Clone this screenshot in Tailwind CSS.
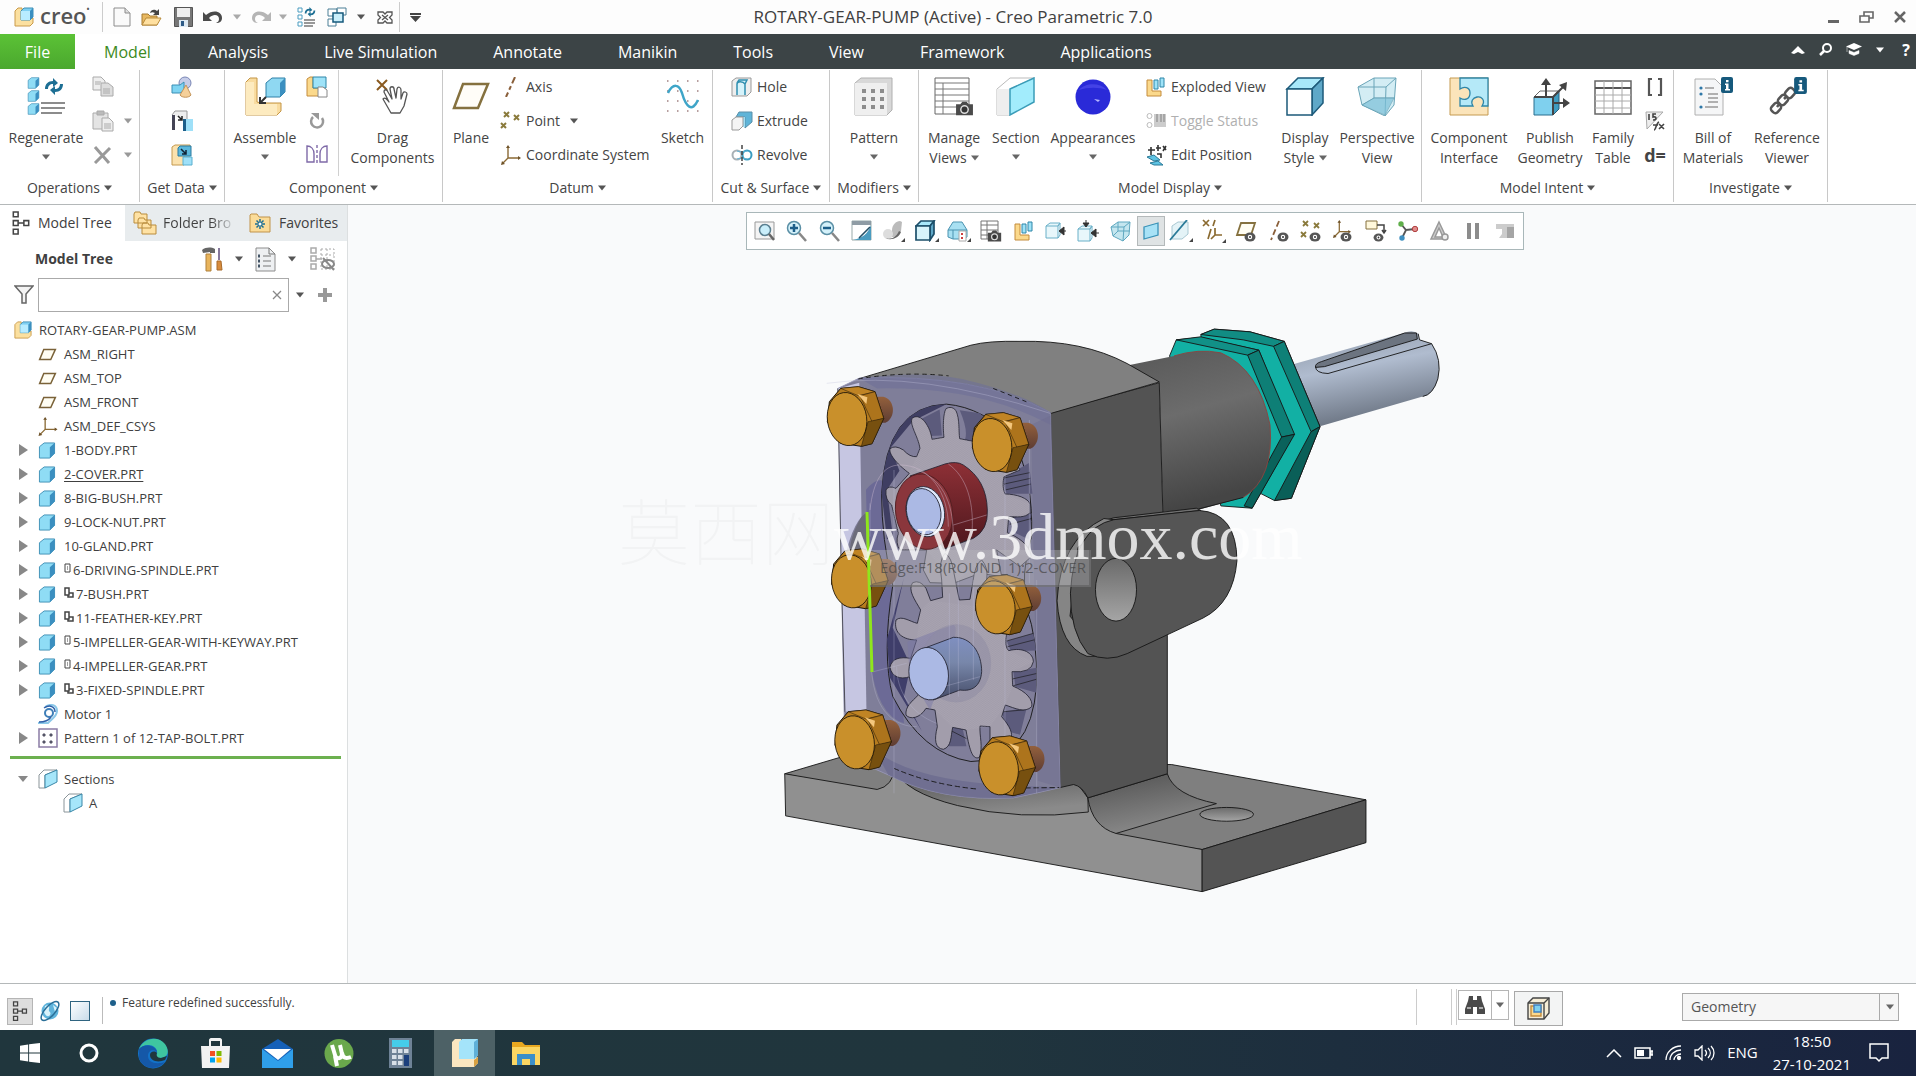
<!DOCTYPE html>
<html lang="en">
  <head>
    <meta charset="UTF-8" />
    <title>ROTARY-GEAR-PUMP (Active) - Creo Parametric 7.0</title>
    <meta name="viewport" content="width=device-width, initial-scale=1.0" />
    <script src="https://cdn.jsdelivr.net/npm/@tailwindcss/browser@4"></script>
  </head>
  <body class="min-h-screen flex flex-col bg-white text-[#404040] font-['Open_Sans','Noto_Sans_CJK_SC',sans-serif] text-sm">
    <!-- shared symbols -->
    <svg class="hidden">
      <defs>
        <linearGradient id="gPart" x1="0" y1="0" x2="1" y2="1"><stop offset="0" stop-color="#d8f6ff" /><stop offset="1" stop-color="#6fcdf0" /></linearGradient>
        <symbol id="caret" viewBox="0 0 10 6"><path d="M0 0h10L5 6z" fill="currentColor" /></symbol>
        <symbol id="part" viewBox="0 0 18 18">
          <path d="M1 5l5-4h11v11l-5 5H1z" fill="#8fdcf5" stroke="#3f8fb5" />
          <path d="M12 5.500l5-4.500v11l-5 5z" fill="#3b8fc0" />
          <path d="M2 5.500h10V16H2z" fill="url(#gPart)" />
        </symbol>
        <symbol id="asm" viewBox="0 0 20 20">
          <path d="M1 4l3-3h4v11h8l3-1v5l-3 3H1z" fill="#fbe0a0" stroke="#c99a4a" />
          <path d="M7 4l3-3h9v9l-3 3H7z" fill="#7fd0f2" stroke="#3f8fb5" />
          <path d="M7 4h9v9H7z" fill="#b8ecff" />
          <path d="M16 4l3-3v9l-3 3z" fill="#3b8fc0" />
        </symbol>
        <symbol id="plane" viewBox="0 0 20 14"><path d="M6 1.500h12.500l-5 11H1.500z" fill="#fffdf2" stroke="#7a6238" stroke-width="1.600" /></symbol>
        <symbol id="csys" viewBox="0 0 20 20">
          <path d="M7 2v11h11M7 13l-5 5" fill="none" stroke="#8a6a35" stroke-width="1.400" />
          <path d="M7 0l2 3H5zM20 13l-3-2v4zM0 20l1-4 3 3z" fill="#6e5228" />
        </symbol>
        <symbol id="sec" viewBox="0 0 20 20">
          <path d="M1 6l5-5h13l-12 5v13H1z" fill="#fff" stroke="#8a9499" />
          <path d="M7 6l12-5v12L7 19z" fill="#a6e6fa" stroke="#3a87a8" />
        </symbol>
        <symbol id="treei" viewBox="0 0 18 26">
          <g fill="none" stroke="#444" stroke-width="1.600"><path d="M1 1h5v5H1zM1 10h5v5H1zM1 19h5v5H1zM12 10h5v5h-5zM6 12.500h6" /></g>
        </symbol>
        <symbol id="eye" viewBox="0 0 12 10"><ellipse cx="6" cy="5" rx="5.500" ry="4.500" fill="#555" /><circle cx="6" cy="5" r="2.200" fill="#fff" /><circle cx="6" cy="5" r="1" fill="#333" /></symbol>
        <symbol id="cam" viewBox="0 0 18 14"><path d="M1 3h4l2-2.500h4L13 3h4v10.500H1z" fill="#4a4a4a" /><circle cx="9" cy="8" r="4.200" fill="#ddd" /><circle cx="9" cy="8" r="2.800" fill="#333" /></symbol>
        <symbol id="info" viewBox="0 0 12 16"><rect width="12" height="16" rx="2" fill="#16597c" /><path d="M5 3h2.500v2.200H5zM4 6.500h3.500V12H9v1.500H4V12h1V8H4z" fill="#fff" /></symbol>
        <symbol id="expl" viewBox="0 0 20 20"><path d="M1 3h5v11h9v5H1z" fill="#fbd98c" stroke="#c48c3c" /><path d="M8 3h4v9H8zM14 1h4v9h-4z" fill="#9fe3f8" stroke="#2f86a8" /></symbol>
        <symbol id="cyc" viewBox="0 0 20 17">
          <path d="M1 11c0-5 3-8 8-8V0l5 5-5 4V6C6 6 4 8 4 11z" fill="#1d6f94" />
          <path d="M19 6c0 5-3 8-8 8v3l-5-5 5-4v3c3 0 5-2 5-5z" fill="#1d6f94" />
        </symbol>
      </defs>
    </svg>

    <!-- title bar -->
    <header class="h-[34px] flex items-center bg-[#fdfdfd]">
      <div class="flex-1 flex items-center h-full">
        <svg class="w-5 h-5 ml-3.5"><use href="#asm" /></svg>
        <span class="ml-1.5 w-[62px] text-[22px] leading-7 font-semibold text-[#555] pb-1">creo<sup class="text-[8px] -top-3">•</sup></span>
        <span class="w-px h-[30px] bg-[#ccc]"></span>
        <button class="ml-2.5" aria-label="New"><svg width="18" height="20" viewBox="0 0 18 20"><path d="M1 1h11l5 5v13H1z" fill="#fafafa" stroke="#8c8c8c" /><path d="M12 1v5h5" fill="#ddd" stroke="#8c8c8c" /></svg></button>
        <button class="ml-2.5" aria-label="Open"><svg width="21" height="20" viewBox="0 0 21 20"><path d="M1 18V7h6l2 2h7v9z" fill="#e8b860" stroke="#a67a30" /><path d="M1 18l4-7h15l-4 7z" fill="#ffe0a0" stroke="#b98c3c" /><path d="M9 6c1-4 5-4 7-2l2-2v6h-6l2-2c-2-1-3-1-5 0z" fill="#444" /></svg></button>
        <button class="ml-3" aria-label="Save"><svg width="19" height="20" viewBox="0 0 19 20"><path d="M.5.500h18v19H.5z" fill="#777" stroke="#555" /><path d="M3 1h13v9H3z" fill="#eee" /><path d="M5 13h9v7H5z" fill="#dde9f2" /><path d="M7 14h3v5H7z" fill="#2d5a86" /></svg></button>
        <button class="ml-2.5" aria-label="Undo"><svg width="20" height="14" viewBox="0 0 20 14"><path d="M0 2v9h9L6 8c5-5 10-3 10 1 0 2-1 3-3 4 4 0 6-2 6-5 0-7-9-9-16-3z" fill="#4a4a4a" /></svg></button>
        <svg class="w-2 h-1.5 ml-2.5 text-[#aaa]"><use href="#caret" /></svg>
        <button class="ml-2.5" aria-label="Redo"><svg width="20" height="14" viewBox="0 0 20 14"><path d="M20 2v9h-9l3-3C9 3 4 5 4 9c0 2 1 3 3 4-4 0-6-2-6-5 0-7 9-9 16-3z" fill="#b5b5b5" /></svg></button>
        <svg class="w-2 h-1.5 ml-2 text-[#aaa]"><use href="#caret" /></svg>
        <button class="ml-2.5" aria-label="Regenerate"><svg width="20" height="20" viewBox="0 0 20 20"><path d="M1 1h4v4H1zM1 8h4v4H1zM1 15h4v4H1z" fill="#fff" stroke="#4a9cc0" /><use href="#cyc" x="7" y="0" width="12" height="10" /><path d="M7 13h11M7 16h11M7 19h9" stroke="#777" stroke-width="1.500" /></svg></button>
        <button class="ml-2.5" aria-label="Windows"><svg width="20" height="20" viewBox="0 0 20 20" fill="#c9eefa" stroke="#4a7f96"><path d="M1 2h9v7H1zM10 1h9v7h-9zM1 12h8v7H1z" fill="#fff" /><path d="M6 6h10v9H6z" stroke="#16597c" stroke-width="1.500" /></svg></button>
        <svg class="w-2 h-1.5 ml-2.5 text-[#555]"><use href="#caret" /></svg>
        <button class="ml-3" aria-label="Close window"><svg width="16" height="13" viewBox="0 0 16 13"><path d="M1 1h5l2 2 2-2h5v3l-2.500 2.500L15 9v3h-5l-2-2-2 2H1V9l2.500-2.500L1 4z" fill="#fff" stroke="#555" stroke-width="1.300" /><path d="M5 4l6 5M11 4L5 9" stroke="#555" stroke-width="1.300" /></svg></button>
        <span class="ml-1.5 w-px h-[30px] bg-[#ccc]"></span>
        <svg class="ml-2.5" width="11" height="9" viewBox="0 0 11 9"><path d="M0 0h11v2H0zM0 3h11L5.500 9z" fill="#444" /></svg>
      </div>
      <h1 class="text-[17px]">ROTARY-GEAR-PUMP (Active) - Creo Parametric 7.0</h1>
      <div class="flex-1 flex justify-end items-center gap-5 pr-2.5 text-[#666]">
        <button aria-label="Minimize"><svg width="11" height="12"><path d="M0 9h11v3H0z" fill="#666" /></svg></button>
        <button aria-label="Restore"><svg width="15" height="12" viewBox="0 0 15 12" fill="none" stroke="#666" stroke-width="1.600"><path d="M1 5h9v6H1zM5 5V1h9v6h-4" /></svg></button>
        <button aria-label="Close"><svg width="12" height="12" viewBox="0 0 12 12"><path d="M1 1l10 10M11 1L1 11" stroke="#666" stroke-width="2.500" /></svg></button>
      </div>
    </header>

    <!-- ribbon tabs -->
    <nav class="h-[35px] flex bg-[#3c4446] text-white text-base">
      <button class="w-[75px] bg-gradient-to-b from-[#5bc236] to-[#4ba82e]">File</button>
      <button class="w-[105px] bg-white text-[#3d8a22]">Model</button>
      <button class="px-7">Analysis</button>
      <button class="px-7">Live Simulation</button>
      <button class="px-7">Annotate</button>
      <button class="px-7">Manikin</button>
      <button class="px-7">Tools</button>
      <button class="px-7">View</button>
      <button class="px-7">Framework</button>
      <button class="px-7">Applications</button>
      <div class="ml-auto flex items-center gap-3.5 pr-1.5 pb-1">
        <svg width="14" height="8" viewBox="0 0 14 8"><path d="M7 0l7 7-3 1-4-2-4 2-3-1z" fill="#fff" /></svg>
        <svg width="13" height="13" viewBox="0 0 13 13"><circle cx="8" cy="5" r="4" fill="none" stroke="#fff" stroke-width="2" /><path d="M5 8l-4 4" stroke="#fff" stroke-width="2.500" /></svg>
        <svg width="16" height="13" viewBox="0 0 16 13"><path d="M0 3.500L8 0l8 3.500L8 7z" fill="#fff" /><path d="M3 7.500l5 2 5-2v3l-5 2-5-2zM1 4v5" fill="#fff" stroke="#fff" stroke-width=".5" /></svg>
        <svg class="w-2 h-1.5"><use href="#caret" /></svg>
        <button class="font-bold pl-1" aria-label="Help">?</button>
      </div>
    </nav>

    <!-- ribbon -->
    <section class="h-[136px] flex border-b border-[#b4b8b9] bg-white pt-px text-[#444] leading-5">
      <div class="w-[140px] flex flex-col border-r border-[#c8c8c8] mb-0.5 pb-0.5">
        <div class="flex-1 flex">
          <button class="w-[92px] flex flex-col items-center justify-start pt-[7px]">
            <svg class="mb-3" width="40" height="39" viewBox="0 0 40 39">
              <use href="#part" x="1" y="0" width="13" height="12" /><use href="#part" x="1" y="13" width="13" height="12" /><use href="#part" x="1" y="26" width="13" height="12" />
              <use href="#cyc" x="18" y="1" width="20" height="17" />
              <path d="M15 26h24M15 31h24M15 36h21" stroke="#8c8c8c" stroke-width="2" />
            </svg>
            <span>Regenerate</span>
            <svg class="w-2 h-1.5 mt-1.5 text-[#666]"><use href="#caret" /></svg>
          </button>
          <div class="flex flex-col text-[#999]">
            <button class="h-[34px] flex items-center" aria-label="Copy"><svg width="22" height="22" viewBox="0 0 22 22" fill="#eee" stroke="#aaa"><path d="M1 1h8l4 4v9H1z" /><path d="M9 7h7l5 4v9H9z" fill="#ddd" /><path d="M11 13h7M11 15h7M11 17h7M3 6h6M3 8h5" /></svg></button>
            <button class="h-[34px] flex items-center gap-2.5" aria-label="Paste"><svg width="22" height="22" viewBox="0 0 22 22" fill="#e4e4e4" stroke="#aaa"><path d="M1 3h15v16H1z" /><path d="M5 1h7v4H5z" fill="#bbb" /><path d="M10 8h7l4 4v9H10z" fill="#eee" /><path d="M12 14h7M12 16h7M12 18h7" /></svg><svg class="w-2 h-1.5"><use href="#caret" /></svg></button>
            <button class="h-[34px] flex items-center gap-2.5" aria-label="Delete"><svg width="22" height="18" viewBox="0 0 22 18"><path d="M3 1l14 16M18 2L3 17" stroke="#999" stroke-width="3" /></svg><svg class="w-2 h-1.5"><use href="#caret" /></svg></button>
          </div>
        </div>
        <div class="h-6 flex items-center justify-center gap-1">Operations <svg class="w-2 h-1.5 text-[#555]"><use href="#caret" /></svg></div>
      </div>

      <div class="w-[85px] flex flex-col border-r border-[#c8c8c8] mb-0.5 pb-0.5">
        <div class="flex-1 flex flex-col items-center">
          <button class="h-[34px]" aria-label="User-defined feature"><svg width="22" height="22" viewBox="0 0 22 22"><circle cx="14" cy="7" r="6" fill="#c5cce8" stroke="#7a86b5" /><path d="M1 9h8l4-3v9l-4 2H1z" fill="#7fd4f2" stroke="#3a8fb5" /><path d="M15 9l5 10c-2 3-9 3-11 0z" fill="#f5d09a" stroke="#c4955a" /></svg></button>
          <button class="h-[34px]" aria-label="Copy geometry"><svg width="22" height="22" viewBox="0 0 22 22"><path d="M1 5l3-4h12v9" fill="#eee" stroke="#999" /><path d="M1 5h3v15H1z" fill="#445" /><path d="M7 6l4 4M11 6v4H7" stroke="#222" stroke-width="1.500" fill="none" /><path d="M14 9h8v12h-8z" fill="#9fe0f8" /><path d="M12 9h3v12h-3z" fill="#1d5f8a" /></svg></button>
          <button class="h-[34px]" aria-label="Shrinkwrap"><svg width="22" height="22" viewBox="0 0 22 22"><path d="M1 3l3-2h15v11h-6v9H1z" fill="#fbe2ae" stroke="#c49a50" /><path d="M7 4l2-2h11v10H7z" fill="#5cb8dc" stroke="#2a7ba0" /><path d="M10 5l5 5M15 6v4h-4" stroke="#123" stroke-width="1.500" fill="none" /><path d="M12 13h9v8h-9z" fill="#9fe0f8" stroke="#5bb0d0" /></svg></button>
        </div>
        <div class="h-6 flex items-center justify-center gap-1">Get Data <svg class="w-2 h-1.5 text-[#555]"><use href="#caret" /></svg></div>
      </div>

      <div class="w-[218px] flex flex-col border-r border-[#c8c8c8] mb-0.5 pb-0.5">
        <div class="flex-1 flex">
          <button class="w-20 flex flex-col items-center justify-start pt-[7px]">
            <svg class="mb-3" width="42" height="39" viewBox="0 0 42 39">
              <path d="M2 5l4-4h7v24l4 1h20v8l-4 4H2z" fill="#f9dca0" stroke="#c49545" /><path d="M2 5h8v22h23v11H2z" fill="#fdebc0" />
              <path d="M22 6l6-5h13v14l-5 5H22z" fill="#8fd8f2" stroke="#2f80a8" /><path d="M36 6l5-5v14l-5 5z" fill="#3b8fc0" />
              <path d="M22 20l-5 5M16 20v6h6" fill="none" stroke="#333" stroke-width="2" />
            </svg>
            <span>Assemble</span>
            <svg class="w-2 h-1.5 mt-1.5 text-[#666]"><use href="#caret" /></svg>
          </button>
          <div class="w-[34px] pl-px flex flex-col items-start border-r border-[#d0d0d0]">
            <button class="h-[34px]" aria-label="Create"><svg width="22" height="22" viewBox="0 0 22 22"><path d="M1 3l3-2h3v11h12v8H1z" fill="#fbd98c" stroke="#c48c3c" /><path d="M7 1h13v11H7z" fill="#9fe3f8" stroke="#2f86a8" /><path d="M12 11h5l4 3v7h-9z" fill="#fff" stroke="#888" /></svg></button>
            <button class="h-[34px]" aria-label="Repeat"><svg width="22" height="18" viewBox="-2 0 22 18"><path d="M5 5a6 6 0 1 0 9 1" fill="none" stroke="#999" stroke-width="2.500" /><path d="M3 1h8v7z" fill="#999" /></svg></button>
            <button class="h-[34px]" aria-label="Mirror component"><svg width="22" height="20" viewBox="0 0 22 20" fill="none" stroke="#7f6aa8" stroke-width="1.400"><path d="M1 1c4 0 7 3 7 8v8H1zM21 1c-4 0-7 3-7 8v8h7z" /><path d="M11 0v20" stroke-dasharray="3 2" /></svg></button>
          </div>
          <button class="flex-1 pl-1 flex flex-col items-center justify-start pt-[7px]">
            <svg class="mb-3" width="36" height="39" viewBox="0 0 36 39">
              <path d="M2 3l10 10M12 3L2 13" stroke="#8a5a20" stroke-width="2" />
              <path d="M8 22c2-2 4 0 6 3l-5-10c0-3 3-3 4 0l4 7-2-10c0-3 4-3 4 0l2 9 1-9c1-3 4-2 4 1v9l2-6c1-2 4-1 4 1l-3 12-4 7H16z" fill="#fff" stroke="#555" stroke-width="1.300" stroke-linejoin="round" />
            </svg>
            <span>Drag</span><span>Components</span>
          </button>
        </div>
        <div class="h-6 flex items-center justify-center gap-1">Component <svg class="w-2 h-1.5 text-[#555]"><use href="#caret" /></svg></div>
      </div>

      <div class="w-[270px] flex flex-col border-r border-[#c8c8c8] mb-0.5 pb-0.5">
        <div class="flex-1 flex">
          <button class="w-14 flex flex-col items-center justify-start pt-[7px]">
            <svg class="mb-3" width="40" height="39" viewBox="0 0 40 39"><path d="M12 7h25L27 31H3z" fill="#fffdf8" stroke="#85713f" stroke-width="2.500" /></svg>
            <span>Plane</span>
          </button>
          <div class="w-[154px] pl-px flex flex-col">
            <button class="h-[34px] flex items-center gap-1"><svg width="22" height="20" viewBox="0 0 22 20"><path d="M15 0L6 20" stroke="#8a5f3a" stroke-width="2" stroke-dasharray="7 3 4 3" /></svg>Axis</button>
            <button class="h-[34px] flex items-center gap-1"><svg width="22" height="20" viewBox="0 0 22 20" stroke="#8a7a3c" stroke-width="2"><path d="M4 1l5 5M9 1L4 6M14 4l5 5M19 4l-5 5M1 12l5 5M6 12l-5 5" /></svg>Point <svg class="ml-1.5 w-2 h-1.5 text-[#555]"><use href="#caret" /></svg></button>
            <button class="h-[34px] flex items-center gap-1"><svg width="22" height="22"><use href="#csys" x="1" y="1" width="20" height="20" /></svg>Coordinate System</button>
          </div>
          <button class="flex-1 flex flex-col items-center justify-start pt-[7px]">
            <svg class="mb-3" width="36" height="39" viewBox="0 0 36 39">
              <g stroke="#a08080" stroke-width="1.500" stroke-dasharray="1.500 8.500"><path d="M2 4h34M2 14h34M2 24h34M2 34h34" /></g>
              <path d="M3 16C8 6 14 7 17 16c4 14 10 20 16 7" fill="none" stroke="#3fa5c8" stroke-width="2.500" />
            </svg>
            <span>Sketch</span>
          </button>
        </div>
        <div class="h-6 flex items-center justify-center gap-1">Datum <svg class="w-2 h-1.5 text-[#555]"><use href="#caret" /></svg></div>
      </div>

      <div class="w-[117px] flex flex-col border-r border-[#c8c8c8] mb-0.5 pb-0.5">
        <div class="flex-1 flex flex-col pl-[18px]">
          <button class="h-[34px] flex items-center gap-1"><svg width="22" height="20" viewBox="0 0 22 20"><path d="M1 4l4-3h15v14l-4 4H1z" fill="#eee" stroke="#999" /><path d="M6 18V7c0-3 6-3 8 0v11M14 7l2-4H8L6 6" fill="#d6f3fb" stroke="#2f8fb0" stroke-width="1.500" /></svg>Hole</button>
          <button class="h-[34px] flex items-center gap-1"><svg width="22" height="20" viewBox="0 0 22 20"><path d="M8 1h13v10l-7 6V6H5z" fill="#5fb4d8" stroke="#5a8fa8" /><path d="M5 6h9v10H9" fill="#a0ddf2" /><path d="M1 9l4-3h7v9l-4 4H1z" fill="#f4f4f4" stroke="#999" /></svg>Extrude</button>
          <button class="h-[34px] flex items-center gap-1"><svg width="22" height="20" viewBox="0 0 22 20" fill="none"><ellipse cx="6" cy="10" rx="4.500" ry="4.500" stroke="#a8b0b5" stroke-width="2" /><ellipse cx="16" cy="10" rx="4.500" ry="4.500" stroke="#3a9cc0" stroke-width="2" /><path d="M6 6c3 1 7 1 10 0M6 14c3-1 7-1 10 0" stroke="#5fb4d8" /><path d="M11 0v20" stroke="#444" stroke-width="1.500" stroke-dasharray="4 2" /></svg>Revolve</button>
        </div>
        <div class="h-6 flex items-center justify-center gap-1 whitespace-nowrap">Cut &amp; Surface <svg class="w-2 h-1.5 text-[#555]"><use href="#caret" /></svg></div>
      </div>

      <div class="w-[89px] flex flex-col border-r border-[#c8c8c8] mb-0.5 pb-0.5">
        <button class="flex-1 flex flex-col items-center justify-start pt-[7px]">
          <svg class="mb-3" width="40" height="39" viewBox="0 0 40 39"><path d="M1 6l6-5h31v32l-5 5H1z" fill="#d8d8d8" stroke="#b0b0b0" /><path d="M1 6h32v32H1z" fill="#efefef" /><path d="M8 14h22M8 22h22M8 30h22" stroke="#8c8c8c" stroke-width="4" stroke-dasharray="4 5" /></svg>
          <span>Pattern</span>
          <svg class="w-2 h-1.5 mt-1.5 text-[#666]"><use href="#caret" /></svg>
        </button>
        <div class="h-6 flex items-center justify-center gap-1">Modifiers <svg class="w-2 h-1.5 text-[#555]"><use href="#caret" /></svg></div>
      </div>

      <div class="w-[503px] flex flex-col border-r border-[#c8c8c8] mb-0.5 pb-0.5">
        <div class="flex-1 flex pl-1">
          <button class="w-[62px] flex flex-col items-center justify-start pt-[7px]">
            <svg class="mb-3" width="40" height="39" viewBox="0 0 40 39"><path d="M1 1h34v36H1z" fill="#fff" stroke="#666" /><path d="M1 6h34M1 12h34M1 18h34M1 24h34M1 30h34M9 6v31" stroke="#777" /><use href="#cam" x="21" y="24" width="19" height="15" /></svg>
            <span>Manage</span>
            <span class="flex items-center gap-1">Views <svg class="w-2 h-1.5 text-[#666]"><use href="#caret" /></svg></span>
          </button>
          <button class="w-[62px] flex flex-col items-center justify-start pt-[7px]">
            <svg class="mb-3" width="40" height="39" viewBox="0 0 40 39"><path d="M1 12L14 1h24L14 12v26H1z" fill="#fff" stroke="#bbb" /><path d="M1 12h13v26H1z" fill="#eee" /><path d="M14 12L38 1v24L14 38z" fill="#a2ecfc" stroke="#3a9cb8" stroke-width="1.500" /></svg>
            <span>Section</span>
            <svg class="w-2 h-1.5 mt-1.5 text-[#666]"><use href="#caret" /></svg>
          </button>
          <button class="w-[92px] flex flex-col items-center justify-start pt-[7px]">
            <svg class="mb-3" width="40" height="39" viewBox="0 0 40 39"><circle cx="20" cy="20" r="17.500" fill="#2a2ad8" /><path d="M6 13c6-7 20-8 28 0-8-3-19-3-28 0z" fill="#4442e6" /><path d="M21 22l6 1-2 2z" fill="#b8b8ff" /></svg>
            <span>Appearances</span>
            <svg class="w-2 h-1.5 mt-1.5 text-[#666]"><use href="#caret" /></svg>
          </button>
          <div class="w-[138px] pl-[7px] flex flex-col whitespace-nowrap">
            <button class="h-[34px] flex items-center gap-1"><svg width="21" height="20"><use href="#expl" width="20" height="20" /></svg>Exploded View</button>
            <button class="h-[34px] flex items-center gap-1 text-[#b0b0b0]" disabled><svg width="21" height="18" viewBox="0 0 21 18"><path d="M8 2h12v13H8z" fill="#ccc" /><path d="M11 2v8M15 2v8M18 2v8" stroke="#999" stroke-width="1.500" /><circle cx="3.500" cy="4" r="2.500" fill="none" stroke="#bbb" /><circle cx="3.500" cy="13" r="2.500" fill="none" stroke="#bbb" /></svg>Toggle Status</button>
            <button class="h-[34px] flex items-center gap-1"><svg width="21" height="22" viewBox="0 0 21 22"><path d="M2 6h7M5 3v8M12 1v6M10 4h5M17 2l3 4M20 2l-3 5M11 10h4v4" stroke="#333" stroke-width="1.600" fill="none" /><path d="M1 13l7-2 6 5-6 1zM4 19l8-2 5 4H8z" fill="#5fc4e4" stroke="#2a7a98" /></svg>Edit Position</button>
          </div>
          <button class="w-14 flex flex-col items-center justify-start pt-[7px]">
            <svg class="mb-3" width="40" height="39" viewBox="0 0 40 39"><g stroke="#1d5a7a" stroke-width="1.500"><path d="M2 12L13 1h25L27 12z" fill="#a8e8fa" /><path d="M27 12L38 1v25L27 38z" fill="#5fa8c8" /><path d="M2 12h25v26H2z" fill="#fff" /></g></svg>
            <span>Display</span>
            <span class="flex items-center gap-1">Style <svg class="w-2 h-1.5 text-[#666]"><use href="#caret" /></svg></span>
          </button>
          <button class="flex-1 flex flex-col items-center justify-start pt-[7px]">
            <svg class="mb-3" width="40" height="39" viewBox="0 0 40 39" stroke="#6aa5b8"><path d="M1 10L17 1h22l-2 27-9 11L5 28z" fill="#d3edf4" /><path d="M1 10h28L39 1M29 10l-1 29M17 1v20h20M17 21L5 28" fill="none" /><path d="M17 21h20l-9 17L5 28z" fill="#7cc0d8" opacity=".7" /></svg>
            <span>Perspective</span><span>View</span>
          </button>
        </div>
        <div class="h-6 flex items-center justify-center gap-1">Model Display <svg class="w-2 h-1.5 text-[#555]"><use href="#caret" /></svg></div>
      </div>

      <div class="w-[252px] flex flex-col border-r border-[#c8c8c8] mb-0.5 pb-0.5">
        <div class="flex-1 flex pl-1">
          <button class="w-[86px] flex flex-col items-center justify-start pt-[7px]">
            <svg class="mb-3" width="40" height="39" viewBox="0 0 40 39"><path d="M1 1h38v37H1z" fill="#fbe4ba" stroke="#c49a50" /><path d="M11 1h28v28h-6c4-6-1-10-5-9s-7 4-4 9H11v-8c5 3 10 1 10-5s-6-7-10-4z" fill="#b5e9f8" stroke="#2f86a8" stroke-width="1.300" /></svg>
            <span>Component</span><span>Interface</span>
          </button>
          <button class="w-[76px] flex flex-col items-center justify-start pt-[7px]">
            <svg class="mb-3" width="40" height="39" viewBox="0 0 40 39"><path d="M4 20l6-6h18l-5 6z" fill="#fff" stroke="#666" /><path d="M4 20h19v18H4z" fill="#7fd0ee" stroke="#2a6f8f" /><path d="M23 20l6-6v18l-6 6z" fill="#3f9cc0" stroke="#2a5f7a" /><path d="M16 20V5M23 20L34 9M22 26h15M4 20h19v18" fill="none" stroke="#444" stroke-width="2" /><path d="M16 1l5 7H11zM37 5l-1 9-7-6zM40 26l-7-5v10z" fill="#444" /></svg>
            <span>Publish</span><span>Geometry</span>
          </button>
          <button class="w-[50px] flex flex-col items-center justify-start pt-[7px]">
            <svg class="mb-3" width="38" height="39" viewBox="0 0 38 39"><path d="M1 4h36v33H1z" fill="#fff" stroke="#666" stroke-width="1.500" /><path d="M1 11h36" stroke="#555" stroke-width="2" /><path d="M1 18h36M1 24h36M1 31h36M10 4v33M19 4v33M28 4v33" stroke="#aaa" /></svg>
            <span>Family</span><span>Table</span>
          </button>
          <div class="w-[34px] flex flex-col items-center text-[#444]">
            <button class="h-[34px]" aria-label="Parameters"><svg width="16" height="18" viewBox="0 0 16 18" fill="none" stroke="#555" stroke-width="2.200"><path d="M5 1H2v16h3M11 1h3v16h-3" /></svg></button>
            <button class="h-[34px]" aria-label="Switch dimensions"><svg width="20" height="20" viewBox="0 0 20 20" fill="none" stroke="#444"><path d="M1 1h17L2 18z" fill="#eee" stroke="#aaa" /><path d="M4 3v6M11 3H8v3c4-1 4 3 0 3M9 19c2 0 2-7 5-8M8 14h5M14 13l5 5M19 13l-5 5" stroke-width="1.600" /></svg></button>
            <button class="h-[34px] font-bold text-lg" aria-label="Relations">d=</button>
          </div>
        </div>
        <div class="h-6 flex items-center justify-center gap-1">Model Intent <svg class="w-2 h-1.5 text-[#555]"><use href="#caret" /></svg></div>
      </div>

      <div class="w-[154px] flex flex-col border-r border-[#c8c8c8] mb-0.5 pb-0.5">
        <div class="flex-1 flex pl-[3px]">
          <button class="w-[72px] flex flex-col items-center justify-start pt-[7px]">
            <svg class="mb-3" width="40" height="39" viewBox="0 0 40 39"><path d="M2 2h20l8 8v28H2z" fill="#f5f6f7" stroke="#b0b0b0" /><path d="M12 11h9M15 17h10M15 21h10M15 25h10M12 30h13" stroke="#999" stroke-width="1.500" /><g fill="#2f78a8"><circle cx="8" cy="11" r="1.600" /><circle cx="8" cy="17" r="1.600" /><circle cx="8" cy="30" r="1.600" /></g><use href="#info" x="28" y="0" width="12" height="16" /></svg>
            <span>Bill of</span><span>Materials</span>
          </button>
          <button class="flex-1 pr-0.5 flex flex-col items-center justify-start pt-[7px]">
            <svg class="mb-3" width="40" height="39" viewBox="0 0 40 39" fill="none" stroke="#555" stroke-width="2.500"><rect x="-5" y="-4" width="10" height="8" rx="3" transform="translate(9 31) rotate(-48)" /><rect x="-5" y="-4" width="10" height="8" rx="3" transform="translate(16 23) rotate(-48)" /><rect x="-5" y="-4" width="10" height="8" rx="3" transform="translate(23 16) rotate(-48)" /><path d="M10 30l3-4M17 22l3-3" /><use href="#info" x="27" y="0" width="13" height="17" stroke="none" /></svg>
            <span>Reference</span><span>Viewer</span>
          </button>
        </div>
        <div class="h-6 flex items-center justify-center gap-1">Investigate <svg class="w-2 h-1.5 text-[#555]"><use href="#caret" /></svg></div>
      </div>
    </section>

    <main class="flex-1 flex">
      <!-- navigator -->
      <aside class="w-[348px] shrink-0 flex flex-col border-r border-[#dcdfe0] bg-white">
        <div class="h-9 flex bg-[#e8ecee]">
          <button class="w-[125px] flex items-center gap-2 pl-3 bg-white"><svg width="18" height="25"><use href="#treei" width="18" height="25" /></svg>Model Tree</button>
          <button class="w-[118px] flex items-center gap-1.5 pl-2 whitespace-nowrap"><svg class="shrink-0" width="24" height="24" viewBox="0 0 24 24" fill="#ffe2a4" stroke="#b98c3c"><path d="M1 3l1-2h5l1 2h6v9H1zM5 9l1-2h5l1 2h6v8H5zM9 14l1-2h5l1 2h7v9H9z" /></svg><span class="bg-gradient-to-r from-[#404040] from-70% to-[#c4c8ca] bg-clip-text text-transparent">Folder Bro</span></button>
          <button class="flex items-center gap-2 pl-1.5"><svg width="22" height="20" viewBox="0 0 22 20"><path d="M1 19V2l1-1h6l2 3h11v15z" fill="#fbdc98" stroke="#c0934a" /><path d="M11 6v10M6 11h10M7.500 7.500l7 7M14.500 7.500l-7 7" stroke="#1d6f94" stroke-width="1.500" /><circle cx="11" cy="11" r="1.500" fill="#fff" /></svg>Favorites</button>
        </div>
        <div class="h-9 flex items-center pl-[35px]">
          <h2 class="font-bold flex-1">Model Tree</h2>
          <button class="mr-3" aria-label="Settings"><svg width="22" height="25" viewBox="0 0 22 25"><path d="M1 3c4-3 9-3 13-1v4H9V5L2 6z" fill="#666" /><path d="M5 7h5v17H5z" fill="#e8b45c" stroke="#b0803a" /><path d="M18 1v12" stroke="#86789c" stroke-width="2" /><path d="M16 14h4l1 9h-5z" fill="#d88c3c" stroke="#a86a2a" /></svg></button>
          <svg class="w-2 h-1.5 mr-3 text-[#555]"><use href="#caret" /></svg>
          <button class="mr-3" aria-label="Show"><svg width="21" height="25" viewBox="0 0 21 25"><path d="M1 1h13l6 6v17H1z" fill="#eef0f2" stroke="#8c8c8c" /><path d="M14 1v6h6M8 9h8M8 14h8M8 19h8" fill="none" stroke="#777" /><path d="M3 9h2M3 14h2M3 19h2" stroke="#456" stroke-width="3" /></svg></button>
          <svg class="w-2 h-1.5 mr-3.5 text-[#555]"><use href="#caret" /></svg>
          <button class="mr-3" aria-label="Hide columns"><svg width="25" height="24" viewBox="0 0 25 24" fill="none" stroke="#aaa"><path d="M1 1h5v5H1zM1 9h5v5H1zM1 17h5v5H1zM6 12h6" stroke-width="1.500" /><path d="M11 2h13v20H11zM11 8h13M17 2v20" stroke-dasharray="2 2" /><ellipse cx="18" cy="17" rx="6" ry="4" stroke="#888" stroke-width="2" /><path d="M13 11l11 12" stroke="#888" stroke-width="2" /></svg></button>
        </div>
        <div class="h-[35px] flex items-center pl-3.5 mb-1.5">
          <label for="filter" aria-label="Filter"><svg width="20" height="19" viewBox="0 0 20 19"><path d="M1 1h18l-7 8v9H8V9z" fill="#f3f3f3" stroke="#666" stroke-width="1.500" /></svg></label>
          <div class="ml-1 h-[34px] flex items-center border border-[#aaa]">
            <input id="filter" type="text" class="w-[233px] h-full outline-none px-1" />
            <button class="w-4 h-full" aria-label="Clear"><svg width="10" height="10" viewBox="0 0 10 10"><path d="M1 1l8 8M9 1L1 9" stroke="#888" stroke-width="1.300" /></svg></button>
          </div>
          <svg class="w-2 h-1.5 ml-[7px] mr-3.5 text-[#555]"><use href="#caret" /></svg>
          <button aria-label="Add filter"><svg width="14" height="14"><path d="M5 0h4v5h5v4H9v5H5V9H0V5h5z" fill="#999" /></svg></button>
        </div>
        <ul id="tree" class="text-[13px]"></ul>
        <div class="mt-1.5 mb-2 ml-2.5 mr-1.5 h-[3px] bg-[#6cb04f]"></div>
        <ul class="text-[13px]">
          <li class="h-6 flex items-center pl-[18px]"><svg class="w-2.5 h-2 mr-2.5 text-[#888]"><use href="#caret" /></svg><svg class="w-5 h-5 mr-[6px]"><use href="#sec" /></svg>Sections</li>
          <li class="h-6 flex items-center pl-[63px]"><svg class="w-5 h-5 mr-[6px]"><use href="#sec" /></svg>A</li>
        </ul>
      </aside>

      <!-- graphics area -->
      <section class="flex-1 relative bg-[#f9fafb] overflow-hidden">
        <div class="mt-[7px] ml-[398px] w-[778px] h-[38px] flex items-center justify-between px-0.5 border border-[#a9b7b9] bg-white">
          <button class="w-8 h-7 flex items-center justify-center" aria-label="Refit"><svg width="22" height="22" viewBox="0 0 22 22"><path d="M1 2h19v17H1z" fill="#f4f4f4" stroke="#999" /><circle cx="11" cy="10" r="5.500" fill="#c9eefa" stroke="#5a7f90" stroke-width="1.500" /><path d="M15 14l5 6" stroke="#666" stroke-width="2.500" /></svg></button>
          <button class="w-8 h-7 flex items-center justify-center" aria-label="Zoom in"><svg width="22" height="22" viewBox="0 0 22 22"><circle cx="8" cy="8" r="6.500" fill="#d4f1fa" stroke="#5a8fa5" stroke-width="1.500" /><path d="M4 8h8M8 4v8" stroke="#1d5f8a" stroke-width="2.500" /><path d="M13 13l7 8" stroke="#888" stroke-width="2.500" /></svg></button>
          <button class="w-8 h-7 flex items-center justify-center" aria-label="Zoom out"><svg width="22" height="22" viewBox="0 0 22 22"><circle cx="8" cy="8" r="6.500" fill="#d4f1fa" stroke="#5a8fa5" stroke-width="1.500" /><path d="M4 8h8" stroke="#1d5f8a" stroke-width="2.500" /><path d="M13 13l7 8" stroke="#888" stroke-width="2.500" /></svg></button>
          <button class="w-8 h-7 flex items-center justify-center" aria-label="Repaint"><svg width="22" height="22" viewBox="0 0 22 22"><path d="M1 1h19v19H1z" fill="#fff" stroke="#9aa" /><path d="M1 1h19v4H1z" fill="#8f9ca5" /><path d="M20 5v15H2c9-2 15-6 18-15z" fill="#4a9cc0" /><path d="M19 7L8 18" stroke="#244f66" stroke-width="1.600" /></svg></button>
          <button class="w-8 h-7 flex items-center justify-center" aria-label="Shading"><svg width="24" height="22" viewBox="0 0 24 22"><path d="M10 10c0-5 4-9 8-9l2 1-1 9c-3 5-6 6-9 6z" fill="#bbb" /><circle cx="6" cy="14" r="5" fill="#ddd" /><path d="M3 18c5 2 11 0 14-7l2 1c-2 6-10 9-16 6z" fill="#666" /><path d="M23 18v4h-4z" fill="#444" /></svg></button>
          <button class="w-8 h-7 flex items-center justify-center" aria-label="Display style"><svg width="24" height="22" viewBox="0 0 24 22"><g stroke="#1d4f6a" stroke-width="1.700"><path d="M1 6l5-5h13l-4 5z" fill="#a8e8fa" /><path d="M15 6l4-5v13l-4 6z" fill="#5fa8c8" /><path d="M1 6h14v14H1z" fill="#d8f4fb" /></g><path d="M24 18v4h-4z" fill="#444" /></svg></button>
          <button class="w-8 h-7 flex items-center justify-center" aria-label="Saved orientations"><svg width="24" height="22" viewBox="0 0 24 22"><path d="M1 10l5-8h9l5 8v7l-5 2H6l-5-2z" fill="#a8e0f2" stroke="#4a93b0" /><path d="M6 10h14M1 10h5v9" fill="none" stroke="#4a93b0" /><path d="M12 11h7v10h-7z" fill="#fff" stroke="#aaa" /><path d="M14 14h2M14 18h2" stroke="#d04040" stroke-width="2" /><path d="M24 18v4h-4z" fill="#444" /></svg></button>
          <button class="w-8 h-7 flex items-center justify-center" aria-label="View manager"><svg width="22" height="22" viewBox="0 0 22 22"><path d="M1 1h17v18H1zM1 5h17M1 10h17M1 15h9M7 1v18" fill="#fff" stroke="#777" /><use href="#cam" x="7" y="10" width="15" height="12" /></svg></button>
          <button class="w-8 h-7 flex items-center justify-center" aria-label="Exploded view"><svg width="20" height="20"><use href="#expl" width="20" height="20" /></svg></button>
          <button class="w-8 h-7 flex items-center justify-center" aria-label="Activate"><svg width="22" height="20" viewBox="0 0 22 20"><path d="M1 5l4-3h10l-2 3v12H1z" fill="#e8f7fb" stroke="#6ab0c8" /><path d="M1 5h12l2-3v12l-2 3" fill="none" stroke="#6ab0c8" /><path d="M21 10h-3M19 6l-5 4 5 4z" fill="#333" stroke="#333" /></svg></button>
          <button class="w-8 h-7 flex items-center justify-center" aria-label="Assembly drag"><svg width="22" height="22" viewBox="0 0 22 22"><path d="M1 9l4-3h10l-2 3v12H1z" fill="#e8f7fb" stroke="#6ab0c8" /><path d="M1 9h12l2-3v12l-2 3" fill="none" stroke="#6ab0c8" /><path d="M9 0v3M6 3h6L9 7zM22 13h-3M19 9l-5 4 5 4z" fill="#333" stroke="#333" /></svg></button>
          <button class="w-8 h-7 flex items-center justify-center" aria-label="Perspective"><svg width="21" height="22" viewBox="0 0 21 22" stroke="#5fa8c0"><path d="M1 7l7-5h12l-1 13-6 6L3 16z" fill="#c4e6ef" /><path d="M1 7h13l6-5M14 7l-1 14M8 2v9h12M8 11l-5 5" fill="none" /></svg></button>
          <button class="w-[28px] h-[30px] flex items-center justify-center bg-[#dfe3e4] border border-[#b4b9ba]" aria-label="Sections"><svg width="18" height="18" viewBox="0 0 18 18"><path d="M2 5l14-4v12L2 17z" fill="#a8e2f6" stroke="#3a93b8" stroke-width="1.300" /></svg></button>
          <button class="w-8 h-7 flex items-center justify-center" aria-label="Clipping"><svg width="24" height="22" viewBox="0 0 24 22"><path d="M3 6l6-4h10v12l-6 5H3z" fill="#e4f3f7" stroke="#a9c8d2" /><path d="M18 0L1 20" stroke="#2a7a98" stroke-width="1.800" /><path d="M24 18v4h-4z" fill="#444" /></svg></button>
          <button class="w-8 h-7 flex items-center justify-center" aria-label="Datum filters"><svg width="24" height="24" viewBox="0 0 24 24" stroke="#8a6a30" stroke-width="1.700"><path d="M1 1l6 6M7 1L1 7M13 1l-2 6M9 10l-3 10M13 9v7h7M13 16l-4 4" fill="none" /><path d="M24 20v4h-4z" fill="#444" stroke="none" /></svg></button>
          <button class="w-8 h-7 flex items-center justify-center" aria-label="Plane display"><svg width="22" height="22" viewBox="0 0 22 22"><path d="M6 3h14l-4 12H2z" fill="#fffdf2" stroke="#85713f" stroke-width="1.800" /><use href="#eye" x="9" y="12" width="12" height="10" /></svg></button>
          <button class="w-8 h-7 flex items-center justify-center" aria-label="Axis display"><svg width="22" height="22" viewBox="0 0 22 22"><path d="M11 1L3 20" stroke="#8a5f3a" stroke-width="1.800" stroke-dasharray="6 3" /><use href="#eye" x="9" y="12" width="12" height="10" /></svg></button>
          <button class="w-8 h-7 flex items-center justify-center" aria-label="Point display"><svg width="22" height="22" viewBox="0 0 22 22"><path d="M3 1l5 5M8 1L3 6M14 3l5 5M19 3l-5 5M1 12l5 5M6 12l-5 5" stroke="#8a7a3c" stroke-width="1.800" /><use href="#eye" x="9" y="12" width="12" height="10" /></svg></button>
          <button class="w-8 h-7 flex items-center justify-center" aria-label="Csys display"><svg width="22" height="22" viewBox="0 0 22 22"><use href="#csys" x="1" y="0" width="18" height="18" /><use href="#eye" x="8" y="12" width="12" height="10" /></svg></button>
          <button class="w-8 h-7 flex items-center justify-center" aria-label="Annotation display"><svg width="22" height="22" viewBox="0 0 22 22"><path d="M1 1h11v8H1z" fill="#fff8dc" stroke="#85713f" /><path d="M12 5h7v7M17 10l2 3 2-3" fill="none" stroke="#444" stroke-width="1.500" /><use href="#eye" x="8" y="13" width="11" height="9" /></svg></button>
          <button class="w-8 h-7 flex items-center justify-center" aria-label="Spin center"><svg width="22" height="22" viewBox="0 0 22 22"><path d="M4 4l5 6 9-1M9 10l-4 8" fill="none" stroke="#555" stroke-width="1.800" /><circle cx="4" cy="4" r="2.700" fill="#5fae4a" /><circle cx="18" cy="9" r="2.700" fill="#e08a8a" stroke="#b04040" /><circle cx="5" cy="18" r="2.700" fill="#3f8fc0" /></svg></button>
          <button class="w-8 h-7 flex items-center justify-center" aria-label="Simulate"><svg width="22" height="22" viewBox="0 0 22 22" fill="#ccc" stroke="#999" stroke-width="1.500"><path d="M10 2l8 17H2z" /><path d="M10 8l4 9H6z" fill="#fff" /><circle cx="16" cy="17" r="3" fill="#eee" /></svg></button>
          <button class="w-8 h-7 flex items-center justify-center" aria-label="Pause"><svg width="14" height="16"><path d="M1 0h4v16H1zM9 0h4v16H9z" fill="#8c8c8c" /></svg></button>
          <button class="w-8 h-7 flex items-center justify-center" aria-label="Stop"><svg width="20" height="16" viewBox="0 0 20 16"><path d="M1 1h18v14H4l3-4V6H1z" fill="#ccc" /><path d="M12 4h7v11h-7z" fill="#a5a5a5" /></svg></button>
        </div>

        <!-- pump assembly -->
        <svg class="absolute left-[422px] top-[105px]" width="700" height="600" viewBox="0 0 700 600">
          <defs>
            <linearGradient id="gBoss" x1="0" y1="0" x2=".25" y2="1"><stop offset="0" stop-color="#585858" /><stop offset=".45" stop-color="#6c6c6c" /><stop offset="1" stop-color="#454545" /></linearGradient>
            <linearGradient id="gShaft" x1="0" y1="0" x2=".3" y2="1"><stop offset="0" stop-color="#8791a0" /><stop offset=".45" stop-color="#b0bccf" /><stop offset="1" stop-color="#666f7d" /></linearGradient>
            <linearGradient id="gSpin" x1="0" y1="0" x2="0" y2="1"><stop offset="0" stop-color="#7f8fc0" /><stop offset=".4" stop-color="#7887aa" /><stop offset="1" stop-color="#454c68" /></linearGradient>
            <linearGradient id="gBush" x1="0" y1="0" x2="0" y2="1"><stop offset="0" stop-color="#8e3036" /><stop offset="1" stop-color="#4c171d" /></linearGradient>
            <linearGradient id="gFil" x1="0" y1="0" x2=".4" y2="1"><stop offset="0" stop-color="#505050" /><stop offset="1" stop-color="#8a8a8a" /></linearGradient>
            <linearGradient id="gHole" x1="0" y1="0" x2="0" y2="1"><stop offset="0" stop-color="#6a6a6a" /><stop offset="1" stop-color="#a5a5a5" /></linearGradient>
            <linearGradient id="gShank" x1="0" y1="0" x2="0" y2="1"><stop offset="0" stop-color="#93603c" /><stop offset="1" stop-color="#5e3d33" /></linearGradient>
            <pattern id="hatch" width="5" height="5" patternUnits="userSpaceOnUse" patternTransform="rotate(35)"><path d="M0 1h5" stroke="#bcb3be" stroke-width="1" opacity=".6" /></pattern>
            <g id="bolt">
              <path d="M140 30h30c36 8 38 64 6 78h-36z" fill="url(#gShank)" />
              <path d="M42 5L95 0l50 15 26 80-35 76-32 8-64-10L2 105 8 45z" fill="#b67c1f" stroke="#1c1408" stroke-width="3" />
              <path d="M95 0l50 15-50 12-53-22z" fill="#c08424" stroke="#1c1408" stroke-width="1.500" />
              <path d="M145 15l26 80-35 10-36-78z" fill="#ad741c" stroke="#1c1408" stroke-width="1.500" />
              <path d="M171 95l-35 76-32 8 20-74z" fill="#77500f" stroke="#1c1408" stroke-width="1.500" />
              <ellipse cx="61" cy="97" rx="59" ry="80" transform="rotate(-8 61 97)" fill="#c9902b" stroke="#1c1408" stroke-width="2.500" />
              <path d="M92 22l30 10-3 20z" fill="#f4c77c" />
            </g>
          </defs>

          <g transform="scale(.44643 .38265)" stroke="#161616" stroke-width="2.200" stroke-linejoin="round">
            <!-- shaft -->
            <path d="M1140 152L1420 60Q1440 50 1452 62L1455 78 1482 88Q1506 130 1496 180 1485 222 1462 226L1238 302 1180 320z" fill="url(#gShaft)" stroke="none" />
            <path d="M1452 62L1455 78 1482 88Q1506 130 1496 180 1485 222 1462 226" fill="none" />
            <path d="M1222 150Q1220 140 1235 135L1422 60 1448 60 1450 76 1242 148z" fill="#6c7480" />
            <path d="M1222 148Q1222 165 1250 166L1482 88" fill="none" />
            <!-- lock nuts -->
            <path d="M965 64L995 50 1075 57 1152 82 1232 305 1168 492 1130 498 1000 420z" fill="#12b0a4" />
            <path d="M995 50L1075 57 1152 82 1128 95 1060 78 965 64z" fill="#118c83" />
            <path d="M1152 82L1232 305 1212 318 1128 95z" fill="#0e8077" />
            <path d="M1232 305L1168 492 1130 498 1212 318z" fill="#0a5f58" />
            <path d="M895 120L910 78 965 72 1095 105 1172 328 1080 518 1010 512z" fill="#12b0a4" />
            <path d="M910 78L965 70 1095 105 1070 118z" fill="#119087" />
            <path d="M1095 105L1175 325 1146 332 1070 118z" fill="#0e7f76" />
            <path d="M1175 325L1080 518 1062 512 1146 332z" fill="#0a625b" />
            <!-- gland boss -->
            <path d="M800 145L905 120Q960 100 1010 112 1095 155 1120 300 1130 440 1060 490L960 522 880 528 872 190z" fill="url(#gBoss)" stroke="none" />
            <path d="M905 120Q960 100 1010 112 1095 155 1120 300 1130 440 1060 490" fill="none" stroke="#8a4440" />
            <path d="M1060 490L960 520" fill="none" />

            <!-- base -->
            <path d="M33 1212L160 1168 900 1188 1335 1280 968 1410 500 1330z" fill="#7f7f7f" />
            <path d="M33 1212L240 1253Q275 1245 280 1195L720 1240 775 1368 968 1410V1520L35 1322z" fill="#909090" />
            <path d="M968 1410L1335 1280V1392L968 1520z" fill="#545454" />
            <ellipse cx="1023" cy="1318" rx="60" ry="18" fill="url(#gHole)" />
            <path d="M280 1200Q300 1260 420 1295 560 1335 713 1312L712 1275 690 1240 520 1200z" fill="url(#gFil)" />
            <path d="M712 1275L890 1212Q905 1268 1000 1290L775 1368Q722 1350 712 1275z" fill="url(#gFil)" />

            <!-- housing -->
            <path d="M628 268L872 190 880 530 890 850 890 1212 712 1275Q700 1245 680 1240L650 1248z" fill="#535353" />
            <path d="M198 180L450 92Q490 80 560 82 700 78 800 140L872 188 630 270Q470 165 198 180z" fill="#808080" />

            <!-- lug -->
            <path d="M745 552L770 543 955 518 965 524 770 548z" fill="#707070" />
            <path d="M748 545Q650 600 643 760 650 880 710 905L745 905 672 800 690 620 770 548z" fill="#858585" />
            <path d="M770 548L962 524Q1045 530 1046 655 1038 765 970 805L800 898Q755 922 712 898 672 840 673 740 680 570 770 548z" fill="#555" />
            <ellipse cx="775" cy="731" rx="46" ry="82" fill="url(#gHole)" />

            <!-- translucent cover -->
            <path d="M152 205L200 178Q470 165 628 268L650 1248Q600 1262 545 1275 380 1285 265 1215L168 1165z" fill="#7f7e99" stroke="#9796b5" />
            <path d="M152 205L200 190 205 540Q175 580 160 700z" fill="#c6c6e2" stroke="none" />
            <path d="M160 700L212 770 216 1045 168 1050z" fill="#c6c6e2" stroke="none" />
            <path d="M152 205L160 700 168 1050" fill="none" stroke-width="1.500" />
            <path d="M205 540Q175 600 180 640L215 640V530z" fill="#6c6c7a" stroke="none" />
            <path d="M200 178Q330 158 430 180 560 215 628 268L628 300Q470 200 240 205z" fill="#6e6f98" opacity=".6" stroke="none" />
            <path d="M585 300L630 275 650 1248 600 1230z" fill="#6f6e90" opacity=".5" stroke="none" />
            <path d="M235 1150Q330 1240 600 1245L650 1248 545 1275Q380 1285 265 1215z" fill="#66668c" opacity=".6" stroke="none" />
            <path d="M278 1198Q360 1240 465 1252M500 1250L648 1248" fill="none" stroke-dasharray="12 6" />
            <path d="M198 180Q300 160 400 172M500 205L575 240" fill="none" stroke-dasharray="10 8" />
            <!-- pump chamber -->
            <path d="M215 470Q250 420 270 470V640L300 1080Q240 1060 225 920z" fill="#5f5e94" opacity=".6" stroke="none" />
            <path d="M250 480Q260 250 395 246 480 255 545 340 590 440 586 590 560 690 575 780 600 860 597 980 585 1180 450 1180 340 1160 275 1010 250 900 275 720 250 600 250 480z" fill="#807e9a" />
            <path d="M250 480Q260 250 395 246L320 290 270 360 290 420 262 470 275 590 262 600z" fill="#3f3e62" stroke="none" />
            <path d="M300 700L262 860 268 960 340 1100 300 1010 315 930 275 830z" fill="#3f3e6a" stroke="none" />
            <path d="M425 262Q450 330 430 350L520 330 470 270zM330 290L345 330 385 328 380 260zM520 440L580 400 588 480 530 480zM535 545L586 530 580 600 545 580z" fill="#5c5b7c" stroke="none" />
            <path d="M530 865L590 845 596 890 540 892zM545 945L597 935V1000L550 985zM520 1050L575 1040 560 1110 530 1100zM385 1090L430 1085 440 1140 400 1140z" fill="#5c5b7c" stroke="none" />
            <path d="M520 440L582 425M524 455L583 440M528 470L584 455M535 545L586 530M537 560L586 545M530 865L590 845M532 880L592 862M540 965L597 950M545 982L597 965M520 1050L570 1045M390 1090L440 1120" fill="none" stroke-width="1.500" />
          </g>

          <!-- upper gear and bush -->
          <g transform="translate(50 60) scale(.33333)" stroke="#222230" stroke-width="2.500" stroke-linejoin="round">
            <path d="M300 235C295 200 268 165 276 145Q292 132 312 152C328 172 333 190 336 208L372 202C368 170 370 130 378 116Q395 106 408 122C420 150 415 180 419 206L460 214 520 180 600 300 552 320Q545 350 555 372C590 372 625 385 630 402V428C615 445 590 440 566 440L562 488C590 500 628 520 634 560L600 590 530 540 545 620 480 610 400 640 330 638 310 600 320 540 240 540Q225 520 235 490L215 405Q195 390 198 360 205 345 228 355L268 310C240 290 205 255 210 236Q225 224 250 240 270 262 290 260z" fill="#a29dab" />
            <path d="M300 235C295 200 268 165 276 145Q292 132 312 152C328 172 333 190 336 208L372 202C368 170 370 130 378 116Q395 106 408 122C420 150 415 180 419 206L460 214 520 180 600 300 552 320 555 372 630 402V428L566 440 562 488 634 560 530 540 400 640 320 540 240 540 215 405 268 310z" fill="url(#hatch)" stroke="none" />
            <path d="M270 318L375 282Q410 272 430 285 500 330 502 420 505 480 460 505L370 538z" fill="url(#gBush)" />
            <ellipse cx="312" cy="425" rx="85" ry="114" transform="rotate(-10 312 425)" fill="#8a363c" stroke="#501c20" />
            <ellipse cx="316" cy="425" rx="57" ry="76" transform="rotate(-12 316 425)" fill="#dde6fa" />
            <ellipse cx="311" cy="425" rx="51" ry="70" transform="rotate(-12 311 425)" fill="#abb9e4" />
            <path d="M150 420C160 330 190 285 240 285 330 285 385 370 385 470M290 300C380 330 400 420 400 500M385 282C440 320 465 400 455 500M400 465L500 435" fill="none" stroke="#d3bfd4" stroke-width="1.500" opacity=".8" />
            <path d="M150 500V400M222 300V640M555 140V640M628 150V640M20 40Q300 0 690 130" fill="none" stroke="#c2c1dc" stroke-width="1.500" opacity=".7" />
          </g>

          <!-- lower gear and fixed spindle -->
          <g transform="translate(50 270) scale(.33333)" stroke="#222230" stroke-width="2.500" stroke-linejoin="round">
            <path d="M302 90C285 60 262 30 278 8Q300 -2 318 25L332 62 368 52 365 0Q355 -60 375 -80 395 -70 402 -20L418 60 450 58 458 10Q465 -50 485 -60 505 -40 500 0L480 80 560 160Q552 200 566 212C610 200 640 220 640 245Q635 280 576 275L578 318C620 335 640 360 635 380 615 400 585 385 556 375L545 410C570 440 580 460 572 478L510 500 510 440 480 438C478 470 490 500 478 532 460 540 450 520 438 450L398 442C392 470 395 500 370 508 345 505 342 480 352 440L345 390 318 385C300 415 270 420 258 405 255 380 275 365 295 345L270 290C240 300 215 290 210 262 215 235 240 230 272 235L290 180C250 180 220 160 228 120 245 105 270 125 292 130z" fill="#a29dab" />
            <path d="M302 90L332 62 480 80 560 160 566 212 640 245 576 275 578 318 556 375 510 440 438 450 398 442 345 390 295 345 270 290 290 180z" fill="url(#hatch)" stroke="none" />
            <path d="M262 185L355 150 400 135Q430 140 330 390L270 290z" fill="#7a78a5" opacity=".5" stroke="none" />
            <ellipse cx="408" cy="250" rx="104" ry="116" fill="#8f8ca4" opacity=".5" stroke="#8a88a0" />
            <path d="M320 202L400 172C455 170 485 220 485 275 482 320 455 335 420 330L340 360z" fill="url(#gSpin)" />
            <ellipse cx="326" cy="281" rx="59" ry="79" transform="rotate(-8 326 281)" fill="#abb9e4" />
            <path d="M155 275C165 400 230 440 290 440M230 260C230 330 270 400 350 430M388 40V350M415 0V350M460 0V300M222 0V640M555 100V560M650 0V640M160 275L260 250M370 320L480 290" fill="none" stroke="#c2c1dc" stroke-width="1.500" opacity=".6" />
          </g>

          <use href="#bolt" transform="translate(56.700 76.700) scale(.33333)" />
          <use href="#bolt" transform="translate(201.700 102.700) scale(.33333)" />
          <use href="#bolt" transform="translate(61 239) scale(.33333)" />
          <use href="#bolt" transform="translate(205 265) scale(.33333)" />
          <use href="#bolt" transform="translate(64.300 400) scale(.33333)" />
          <use href="#bolt" transform="translate(208.300 426) scale(.33333)" />
          <path d="M97 202L102 362" stroke="#8fe61c" stroke-width="3" />
        </svg>

        <div class="absolute left-[522px] top-[345px] w-[221px] h-[37px] flex items-center pl-2.5 bg-[#b9b9be]/40 border-b-2 border-r-2 border-[#555]/50 text-[#444]/70 text-[15px] whitespace-nowrap">Edge:F18(ROUND_1):2-COVER</div>
        <div class="absolute left-[270px] top-[282px] flex items-baseline whitespace-nowrap leading-[88px]">
          <span class="text-[72px] font-thin text-[#777]/5">莫西网</span><span class="font-['Liberation_Serif',serif] text-[66px] text-white/80">www.3dmox.com</span>
        </div>
      </section>
    </main>

    <!-- message bar -->
    <footer class="h-[47px] flex items-center border-t border-[#b4b8b9] bg-white">
      <button class="ml-[7px] mt-2 w-[26px] h-[27px] flex items-center justify-center bg-[#dedede] border border-[#b5b5b5]" aria-label="Navigator"><svg width="16" height="21"><use href="#treei" width="16" height="21" /></svg></button>
      <button class="ml-1.5 mt-2" aria-label="Browser"><svg width="22" height="22" viewBox="0 0 22 22"><circle cx="11" cy="11" r="8.500" fill="#5fb4dc" /><path d="M6 6c3-2 5 0 4 3s3 3 1 6-5 0-6-3zM14 5l4 3-2 4z" fill="#d8f2fb" /><ellipse cx="11" cy="11" rx="12" ry="5" transform="rotate(-48 11 11)" fill="none" stroke="#2a6f98" stroke-width="1.500" /></svg></button>
      <button class="ml-[9px] mt-2 w-5 h-5 bg-gradient-to-br from-white to-[#c8dcea] border border-[#2f6480]" aria-label="Full screen"></button>
      <span class="ml-3 mt-1.5 w-px h-[27px] bg-[#bbb]"></span>
      <p class="flex-1 pb-2 pl-[7px] text-xs flex items-center gap-1.5"><span class="w-1.5 h-1.5 rounded-full bg-[#1d5f8a]"></span>Feature redefined successfully.</p>
      <span class="w-px h-9 bg-[#ccc] mr-[34px]"></span>
      <span class="w-px h-9 bg-[#ccc] mr-1"></span>
      <span class="w-px h-9 bg-[#ccc] mr-px"></span>
      <button class="mb-1 h-[30px] w-[34px] flex items-center justify-center border border-[#b5b5b5]" aria-label="Search"><svg width="22" height="20" viewBox="0 0 22 20"><path d="M5 1h4v4h4V1h4l1 5 3 8v5h-8v-7H9v7H1v-5l3-8z" fill="#4a4a4a" /><path d="M3 13h4M15 13h4" stroke="#aaa" stroke-width="2" /></svg></button>
      <button class="mb-1 h-[30px] w-[17px] flex items-center justify-center border border-l-0 border-[#b5b5b5]" aria-label="Search options"><svg class="w-2 h-1.5 text-[#666]"><use href="#caret" /></svg></button>
      <button class="ml-[5px] mt-0.5 w-[49px] h-[35px] flex items-center justify-center bg-[#f3f4f4] border border-[#a8a8a8]" aria-label="Selection"><svg width="23" height="23" viewBox="0 0 23 23" fill="#f6edd6" stroke="#444" stroke-width="1.400"><path d="M1 6l5-5h16v15l-5 6H1z" /><path d="M1 6h16v16M17 6l5-5" fill="none" /><path d="M4 9h10v10H4z" fill="#fbd98c" stroke="#c48c3c" /><path d="M7 8h7v7H7z" fill="#7fd0ee" stroke="#3f7fc0" /></svg></button>
      <div class="relative ml-[119px] mr-[17px] w-[217px] h-7">
        <select aria-label="Selection filter" class="appearance-none w-full h-full pl-2 bg-[#f6f6f6] border border-[#aaa] text-sm text-[#555]"><option>Geometry</option><option>Parts</option><option>Datums</option></select>
        <span class="absolute right-0 top-0 w-5 h-7 flex items-center justify-center border-l border-[#aaa] pointer-events-none"><svg class="w-2 h-1.5 text-[#666]"><use href="#caret" /></svg></span>
      </div>
    </footer>

    <!-- taskbar -->
    <div class="h-[46px] flex items-center bg-gradient-to-r from-[#20363d] via-[#20353d] to-[#19233f] text-white">
      <div class="flex h-full">
        <button class="w-[60px] flex items-center justify-center" aria-label="Start"><svg width="20" height="20" viewBox="0 0 22 22"><path d="M0 3l9-1.300V10.500H0zM10 1.500L22 0v10.500H10zM0 11.500h9v8.800L0 19zM10 11.500h12V22l-12-1.500z" fill="#fff" /></svg></button>
        <button class="w-[58px] flex items-center justify-center" aria-label="Search"><svg width="20" height="20"><circle cx="10" cy="10" r="8" fill="none" stroke="#fff" stroke-width="3" /></svg></button>
        <button class="w-[70px] flex items-center justify-center" aria-label="Edge"><svg width="32" height="31" viewBox="0 0 32 31"><circle cx="16" cy="15.500" r="15" fill="#1272c8" /><path d="M2 11C6 0 21-3 28 6c5 7 3 14-5 14-5 0-5-2-3-4 1-5-3-9-9-9-4 0-7 2-9 4z" fill="#3fc5a0" /><path d="M2 11c5-6 17-4 18 3-3-3-9-2-9 4 0 6 7 9 17 6-8 9-22 8-26-4z" fill="#1558a8" /><path d="M20 15c-1 2 0 5 4 5l6-2-2 4c-7 3-15 1-15-5 0-3 4-5 7-2z" fill="#20363d" /></svg></button>
        <button class="w-[54px] flex items-center justify-center" aria-label="Store"><svg width="29" height="31" viewBox="0 0 29 31"><path d="M0 8h29l-1 22H1zM8 8V2c0-1 1-2 2-2h9c1 0 2 1 2 2v6h-2V3h-9v5z" fill="#f2f2f2" /><path d="M9 13h5v5H9z" fill="#f25022" /><path d="M15.500 13h5v5h-5z" fill="#7fba00" /><path d="M9 19.500h5v5H9z" fill="#00a4ef" /><path d="M15.500 19.500h5v5h-5z" fill="#ffb900" /></svg></button>
        <button class="w-[70px] flex items-center justify-center" aria-label="Mail"><svg width="31" height="29" viewBox="0 0 31 29"><path d="M0 10L16 0l15 10v19H0z" fill="#1560b8" /><path d="M2 10h27L16 21z" fill="#fff" /><path d="M0 10l16 12 15-12v19H0z" fill="#2f9fea" /></svg></button>
        <button class="w-[54px] flex items-center justify-center" aria-label="uTorrent"><svg width="30" height="31" viewBox="0 0 30 31"><circle cx="15" cy="15.500" r="14.500" fill="#6aa84c" /><path d="M8 7l3 10c1 5 7 4 7-1l-2-9M18 15c1 5 4 6 9 4M11 18l2 10" fill="none" stroke="#fff" stroke-width="4" /></svg></button>
        <button class="w-[68px] flex items-center justify-center" aria-label="Calculator"><svg width="23" height="30" viewBox="0 0 23 30"><path d="M0 0h23v30H0z" fill="#6e8296" /><path d="M3 2h17v7H3z" fill="#45cdea" /><path d="M3 13h17M3 19h17M3 25h12" stroke="#d8e0e8" stroke-width="4" stroke-dasharray="4.500 1.500" /><path d="M15 17h5v11h-5z" fill="#1b3f7c" /></svg></button>
        <button class="w-[61px] flex items-center justify-center bg-[#4d6166]" aria-label="Creo"><svg width="26" height="28" viewBox="0 0 26 28"><path d="M0 3l3-3h6v19h13l4-1v6l-4 4H0z" fill="#fbe6c0" /><path d="M22 21l4-3v6l-4 4z" fill="#d8a040" /><path d="M7 3l3-3h16v16l-3 4H7z" fill="#a4e4fa" /><path d="M22 3l4-3v16l-4 4z" fill="#5fb0d8" /></svg></button>
        <button class="w-[62px] flex items-center justify-center" aria-label="File Explorer"><svg width="28" height="25" viewBox="0 0 28 25"><path d="M0 24V1h10l3 3h15v20z" fill="#e8a820" /><path d="M0 6h28v18H0z" fill="#fbd662" /><path d="M5 24V13h18v11h-5v-6h-8v6z" fill="#3b8fc8" /></svg></button>
      </div>
      <div class="ml-auto flex items-center gap-3">
        <svg width="16" height="9" viewBox="0 0 16 9"><path d="M1 8l7-7 7 7" fill="none" stroke="#fff" stroke-width="1.500" /></svg>
        <svg width="19" height="12" viewBox="0 0 19 12"><path d="M1 1h15v10H1zM17 4h2v4h-2z" fill="none" stroke="#fff" stroke-width="1.500" /><path d="M3 3h7v6H3z" fill="#fff" /></svg>
        <svg width="17" height="16" viewBox="0 0 17 16" fill="none" stroke="#fff" stroke-width="1.300"><path d="M1 15C1 7 8 1 16 1M5 15c0-6 5-10 11-10M9 15c0-3 3-6 7-6" /><circle cx="14" cy="13" r="1.500" fill="#fff" /></svg>
        <svg width="21" height="16" viewBox="0 0 21 16" fill="none" stroke="#fff" stroke-width="1.300"><path d="M1 5h3l4-4v14l-4-4H1zM11 5c2 2 2 4 0 6M14 3c3 3 3 7 0 10M17 1c4 4 4 10 0 14" /></svg>
        <span class="text-[15px]">ENG</span>
        <div class="text-center text-[15px] leading-[23px] pl-[3px] pr-1.5"><div>18:50</div><div>27-10-2021</div></div>
        <button class="mr-[27px]" aria-label="Notifications"><svg width="20" height="20" viewBox="0 0 20 20"><path d="M1 1h18v14h-6l-3 3-3-3H1z" fill="none" stroke="#fff" stroke-width="1.500" /></svg></button>
      </div>
    </div>

    <script>
      // icon, name, expandable, placement glyph
      const rows = [
        ['plane', 'ASM_RIGHT'],
        ['plane', 'ASM_TOP'],
        ['plane', 'ASM_FRONT'],
        ['csys', 'ASM_DEF_CSYS'],
        ['part', '1-BODY.PRT', 1],
        ['part', '2-COVER.PRT', 1],
        ['part', '8-BIG-BUSH.PRT', 1],
        ['part', '9-LOCK-NUT.PRT', 1],
        ['part', '10-GLAND.PRT', 1],
        ['part', '6-DRIVING-SPINDLE.PRT', 1, 'box'],
        ['part', '7-BUSH.PRT', 1, 'pair'],
        ['part', '11-FEATHER-KEY.PRT', 1, 'pair'],
        ['part', '5-IMPELLER-GEAR-WITH-KEYWAY.PRT', 1, 'box'],
        ['part', '4-IMPELLER-GEAR.PRT', 1, 'box'],
        ['part', '3-FIXED-SPINDLE.PRT', 1, 'pair'],
        ['motor', 'Motor 1'],
        ['pattern', 'Pattern 1 of 12-TAP-BOLT.PRT', 1],
      ]
      const icons = {
        plane: `<svg class="w-[19px] h-[13px]"><use href="#plane" /></svg>`,
        csys: `<svg class="w-[20px] h-[19px]"><use href="#csys" /></svg>`,
        part: `<svg class="w-[18px] h-[17px]"><use href="#part" /></svg>`,
        motor: `<svg width="20" height="20" viewBox="0 0 20 20" fill="none" stroke="#3f7fb8"><circle cx="11" cy="9" r="4" stroke-width="2" /><path d="M7 3c6-4 12-2 12 4 0 5-4 7-9 12H0" stroke="#8cc8e8" stroke-width="2" /><path d="M6 4c6-4 11-1 11 4M1 18c6 0 10-2 12-5" stroke="#2f5fa8" stroke-width="1.500" /></svg>`,
        pattern: `<svg width="20" height="20" viewBox="0 0 20 20"><path d="M1 1h18v18H1z" fill="#fff" stroke="#8a7ca5" stroke-width="1.500" /><path d="M5 6h2v2H5zM12 6h2v2h-2zM5 13h2v2H5zM12 13h2v2h-2z" fill="#556" stroke="#556" /></svg>`,
      }
      const glyphs = {
        box: `<svg class="mr-[2px] mb-1" width="7" height="10"><path d="M1 1h5v8H1zM3 4h1M3 6h1" fill="none" stroke="#444" /></svg>`,
        pair: `<svg class="mr-[2px] mb-1" width="10" height="11"><path d="M1 1h4v7H1zM5 6h4v4H4V8" fill="none" stroke="#444" stroke-width="1.500" /></svg>`,
      }
      let html = `<li class="h-6 flex items-center pl-3.5"><svg class="w-[18px] h-[18px] mr-[7px]"><use href="#asm" /></svg>ROTARY-GEAR-PUMP.ASM</li>`
      for (const [icon, name, open, glyph] of rows) {
        const arrow = open
          ? `<svg class="mr-2.5" width="9" height="12"><path d="M0 0l9 6-9 6z" fill="#888" /></svg>`
          : `<span class="w-[19px]"></span>`
        const label = name === '2-COVER.PRT' ? `<u class="underline-offset-2">${name}</u>` : name
        html += `<li class="h-6 flex items-center pl-[19px]">${arrow}<span class="w-[26px]">${icons[icon]}</span>${glyph ? glyphs[glyph] : ''}${label}</li>`
      }
      document.getElementById('tree').innerHTML = html
    </script>
  </body>
</html>
